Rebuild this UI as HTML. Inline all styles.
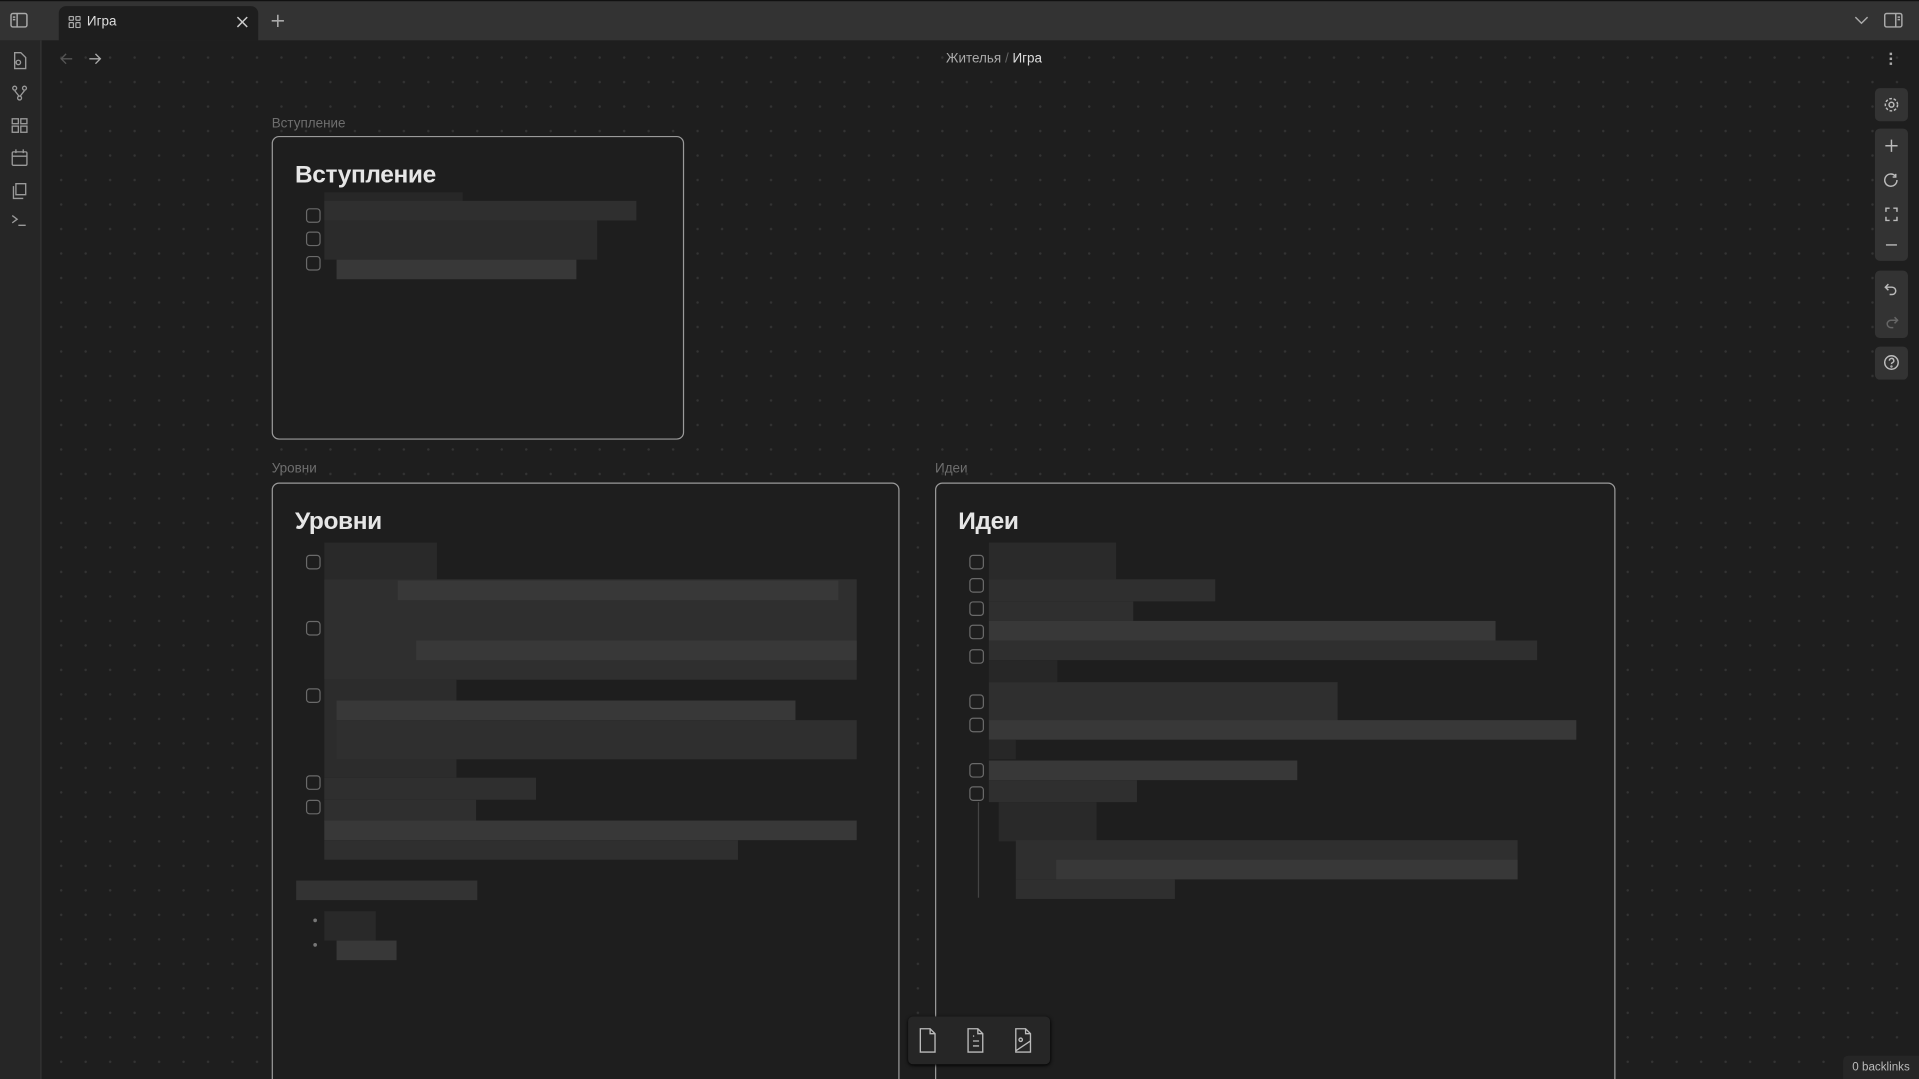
<!DOCTYPE html>
<html><head><meta charset="utf-8"><style>
html,body{margin:0;padding:0;background:#1e1e1e;overflow:hidden;width:1919px;height:1079px}
#w{position:absolute;left:0;top:0;width:1568px;height:881px;overflow:hidden;transform:scale(1.22385,1.2247);transform-origin:0 0;font-family:"Liberation Sans","Noto Sans CJK SC",sans-serif;color:#ddd}
.abs{position:absolute}
#top{left:0;top:0;width:1568px;height:33px;background:#333;border-top:1px solid #111;box-sizing:border-box}
#tab{left:48px;top:5px;width:163px;height:28px;background:#1e1e1e;border-radius:6px 6px 0 0;font-size:11px;color:#ddd}
#rib{left:0;top:33px;width:33px;height:870px;background:#262626;border-right:1px solid #363636}
#canvas{left:34px;top:33px;width:1534px;height:870px;background-color:#1e1e1e;background-image:radial-gradient(circle,#343434 0.8px,transparent 1.2px);background-size:20px 20px;background-position:6px 4px}
.card{position:absolute;border:1.5px solid #9a9a9a;border-radius:6px;background:#1e1e1e;box-sizing:border-box}
.lbl{position:absolute;font-size:11px;color:#6e6e6e}
.h{position:absolute;font-size:20px;font-weight:bold;color:#e6e6e6;letter-spacing:-0.3px}
.cb{position:absolute;width:10px;height:10px;border:1px solid #6a6a6a;border-radius:3px}
.b{position:absolute;background:#2f2f2f}
.b2{position:absolute;background:#383838}
.grp{position:absolute;left:1532px;width:27px;background:#333;border-radius:4px}
svg{position:absolute}
</style></head><body><div id="w">
<div id="top" class="abs"></div>
<svg style="left:8px;top:10px" width="15" height="13" viewBox="0 0 15 13" fill="none" stroke="#aaa" stroke-width="1.2"><rect x="1" y="1" width="13" height="11" rx="1.5"/><line x1="6" y1="1" x2="6" y2="12"/><line x1="2.5" y1="4" x2="4.5" y2="4"/><line x1="2.5" y1="6" x2="4.5" y2="6"/></svg>
<div id="tab" class="abs"><svg style="left:8px;top:8px" width="10" height="10" viewBox="0 0 10 10" fill="none" stroke="#aaa"><rect x="0.5" y="0.5" width="3.5" height="3" rx=".6"/><rect x="6" y="0.5" width="3.5" height="3" rx=".6"/><rect x="0.5" y="5.5" width="3.5" height="4" rx=".6"/><rect x="6" y="5.5" width="3.5" height="4" rx=".6"/></svg><span class="abs" style="left:23px;top:7px">Игра</span><svg style="left:145px;top:8px" width="10" height="10" viewBox="0 0 10 10" stroke="#ccc" stroke-width="1.2"><line x1="1" y1="1" x2="9" y2="9"/><line x1="9" y1="1" x2="1" y2="9"/></svg></div>
<svg style="left:221px;top:11px" width="12" height="12" viewBox="0 0 12 12" stroke="#aaa" stroke-width="1.3"><line x1="6" y1="1" x2="6" y2="11"/><line x1="1" y1="6" x2="11" y2="6"/></svg>
<svg style="left:1515px;top:13px" width="12" height="8" viewBox="0 0 12 8" fill="none" stroke="#aaa" stroke-width="1.2"><path d="M1 1l5 5 5-5"/></svg>
<svg style="left:1539px;top:10px" width="16" height="13" viewBox="0 0 16 13" fill="none" stroke="#aaa" stroke-width="1.2"><rect x="1" y="1" width="14" height="11" rx="1.5"/><line x1="10" y1="1" x2="10" y2="12"/><line x1="11.5" y1="4" x2="13.5" y2="4"/><line x1="11.5" y1="6" x2="13.5" y2="6"/></svg>
<div id="rib" class="abs"></div>
<svg style="left:9px;top:42px" width="14" height="150" viewBox="0 0 14 150" fill="none" stroke="#9a9a9a" stroke-width="1.1">
<path d="M3 1h5l4 4v9H3z"/><circle cx="6" cy="9" r="1.8"/>
<circle cx="3" cy="30" r="1.6"/><circle cx="11" cy="30" r="1.6"/><circle cx="7" cy="38" r="1.6"/><path d="M3 32l3.5 4.5M11 32l-3.5 4.5"/>
<rect x="1" y="55" width="5" height="4"/><rect x="8" y="55" width="5" height="4"/><rect x="1" y="61" width="5" height="5"/><rect x="8" y="61" width="5" height="5"/>
<rect x="1" y="82" width="12" height="11" rx="1"/><line x1="1" y1="85.5" x2="13" y2="85.5"/><line x1="4" y1="80" x2="4" y2="83"/><line x1="10" y1="80" x2="10" y2="83"/>
<path d="M4 108h8v9H4zM2 110v10h8"/>
<path d="M1 134l4 3-4 3M6 142h6"/></svg>
<div id="canvas" class="abs"></div>
<svg style="left:49px;top:43px" width="40" height="10" viewBox="0 0 40 10" fill="none" stroke-width="1.1"><path d="M10 5H1M5 1L1 5l4 4" stroke="#555"/><path d="M24 5h9M29 1l4 4-4 4" stroke="#aaa"/></svg>
<div class="abs" style="left:773px;top:42px;font-size:11px;color:#aaa">Жителья <span style="color:#666">/</span> <span style="color:#ddd">Игра</span></div>
<div class="abs" style="left:1544px;top:43px;width:2px;height:2px;background:#aaa;box-shadow:0 4px #aaa,0 8px #aaa"></div>

<div class="lbl" style="left:222px;top:95px">Вступление</div>
<div class="card" style="left:222px;top:111px;width:337px;height:248px"></div>
<div class="h" style="left:241px;top:132px">Вступление</div>
<div class="cb" style="left:250px;top:170px"></div><div class="cb" style="left:250px;top:189px"></div><div class="cb" style="left:250px;top:209px"></div>
<div class="b" style="left:265px;top:157px;width:113px;height:10px;background:#272727"></div>
<div class="b" style="left:265px;top:164px;width:255px;height:16px"></div>
<div class="b" style="left:265px;top:180px;width:223px;height:32px;background:#2b2b2b"></div>
<div class="b2" style="left:275px;top:212px;width:196px;height:16px"></div>

<div class="lbl" style="left:222px;top:377px">Уровни</div>
<div class="card" style="left:222px;top:394px;width:513px;height:520px"></div>
<div class="h" style="left:241px;top:415px">Уровни</div>
<div class="cb" style="left:250px;top:453px"></div><div class="cb" style="left:250px;top:507px"></div><div class="cb" style="left:250px;top:562px"></div><div class="cb" style="left:250px;top:633px"></div><div class="cb" style="left:250px;top:653px"></div>
<div class="b" style="left:265px;top:443px;width:92px;height:30px;background:#292929"></div>
<div class="b" style="left:265px;top:473px;width:435px;height:82px"></div>
<div class="b2" style="left:325px;top:474px;width:360px;height:16px"></div>
<div class="b2" style="left:340px;top:523px;width:360px;height:16px"></div>
<div class="b" style="left:265px;top:555px;width:108px;height:80px;background:#2c2c2c"></div>
<div class="b2" style="left:275px;top:572px;width:375px;height:16px"></div>
<div class="b" style="left:275px;top:588px;width:425px;height:32px"></div>
<div class="b" style="left:265px;top:635px;width:173px;height:18px"></div>
<div class="b" style="left:265px;top:653px;width:124px;height:18px"></div>
<div class="b2" style="left:265px;top:670px;width:435px;height:16px"></div>
<div class="b" style="left:265px;top:686px;width:338px;height:16px"></div>
<div class="b" style="left:242px;top:719px;width:148px;height:16px;background:#333"></div>
<div class="abs" style="left:256px;top:750px;width:3px;height:3px;border-radius:50%;background:#777;box-shadow:0 20px #777"></div>
<div class="b" style="left:265px;top:744px;width:42px;height:24px;background:#292929"></div>
<div class="b2" style="left:275px;top:768px;width:49px;height:16px"></div>

<div class="lbl" style="left:764px;top:377px">Идеи</div>
<div class="card" style="left:764px;top:394px;width:556px;height:520px"></div>
<div class="h" style="left:783px;top:415px">Идеи</div>
<div class="cb" style="left:792px;top:453px"></div><div class="cb" style="left:792px;top:472px"></div><div class="cb" style="left:792px;top:491px"></div><div class="cb" style="left:792px;top:510px"></div><div class="cb" style="left:792px;top:530px"></div><div class="cb" style="left:792px;top:567px"></div><div class="cb" style="left:792px;top:586px"></div><div class="cb" style="left:792px;top:623px"></div><div class="cb" style="left:792px;top:642px"></div>
<div class="abs" style="left:799px;top:655px;width:1px;height:78px;background:#444"></div>
<div class="b" style="left:808px;top:443px;width:104px;height:30px;background:#2a2a2a"></div>
<div class="b" style="left:808px;top:473px;width:185px;height:18px"></div>
<div class="b" style="left:808px;top:491px;width:118px;height:16px"></div>
<div class="b2" style="left:808px;top:507px;width:414px;height:16px"></div>
<div class="b" style="left:808px;top:523px;width:448px;height:16px"></div>
<div class="b" style="left:808px;top:539px;width:56px;height:18px;background:#272727"></div>
<div class="b" style="left:808px;top:557px;width:285px;height:32px"></div>
<div class="b2" style="left:808px;top:588px;width:480px;height:16px"></div>
<div class="b" style="left:808px;top:604px;width:22px;height:16px;background:#272727"></div>
<div class="b2" style="left:808px;top:621px;width:252px;height:16px"></div>
<div class="b" style="left:808px;top:637px;width:121px;height:18px"></div>
<div class="b" style="left:816px;top:655px;width:80px;height:32px;background:#292929"></div>
<div class="b" style="left:830px;top:686px;width:410px;height:32px"></div>
<div class="b2" style="left:863px;top:702px;width:377px;height:16px"></div>
<div class="b" style="left:830px;top:718px;width:130px;height:16px"></div>

<div class="grp" style="top:72px;height:27px"></div>
<div class="grp" style="top:105px;height:108px"></div>
<div class="grp" style="top:221px;height:55px"></div>
<div class="grp" style="top:283px;height:27px"></div>
<svg style="left:1532px;top:72px" width="27" height="240" viewBox="0 0 27 240" fill="none" stroke="#bbb" stroke-width="1.2">
<circle cx="13.5" cy="13.5" r="2"/><circle cx="13.5" cy="13.5" r="5" stroke-dasharray="2.2 1.4"/>
<path d="M13.5 42v10M8.5 47h10"/>
<path d="M18 75a5 5 0 1 1-1.5-3.5M17 70v2.5h-2.5"/>
<path d="M9 101v-3h3M15 98h3v3M18 105v3h-3M12 108H9v-3"/>
<path d="M9 128h9"/>
<path d="M11 165l-2.5-2.5L11 160M8.5 162.5h5.5a3 3 0 0 1 0 6h-2"/>
<path d="M16 192l2.5-2.5L16 187M18.5 189.5H13a3 3 0 0 0 0 6h2" stroke="#666"/>
<circle cx="13.5" cy="224" r="5.5"/><path d="M11.8 222.5a1.8 1.8 0 1 1 2.5 1.6c-.6.3-.8.7-.8 1.2"/><circle cx="13.5" cy="227.3" r=".4"/>
</svg>

<div class="abs" style="left:742px;top:830px;width:116px;height:39px;background:#262626;border-radius:4px;box-shadow:0 1px 3px #000"></div>
<svg style="left:742px;top:830px" width="116" height="39" viewBox="0 0 116 39" fill="none" stroke="#bbb" stroke-width="1.1">
<path d="M10 10h8l4 4v15H10zM18 10v4h4"/>
<path d="M49 10h8l4 4v15H49zM57 10v4h4M53 16h1M53 20h5M53 24h5"/>
<path d="M88 10h8l4 4v15H88zM96 10v4h4M88 28l12-8"/><circle cx="92" cy="19" r="1.4"/>
</svg>
<div class="abs" style="left:1506px;top:862px;width:62px;height:24px;background:#262626;border-radius:4px 0 0 0;font-size:9.5px;color:#bbb;line-height:20px;text-align:center">0 backlinks</div>
</div></body></html>
